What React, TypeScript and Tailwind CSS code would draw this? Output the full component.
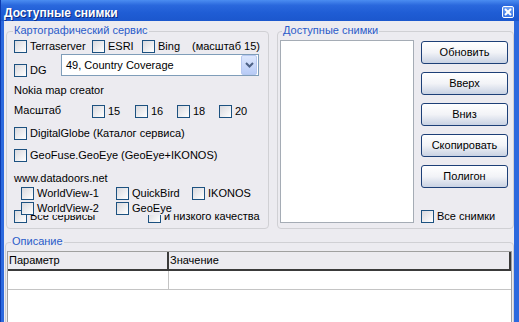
import React from 'react';

type CheckProps = { label: string; className?: string };

// XP-style checkbox with a label to its right
const Check = ({ label, className = '' }: CheckProps) => (
  <label className={`flex items-start h-[13px] shrink-0 ${className}`}>
    <span className="w-[13px] h-[13px] shrink-0 border border-[#1c5180] bg-linear-to-br from-[#d9d9de] to-white" />
    <span className="ml-[3px] leading-[13px] whitespace-nowrap">{label}</span>
  </label>
);

type GroupProps = { title: string; className?: string; labelClass?: string; children?: React.ReactNode };

const Group = ({ title, className = '', labelClass = '', children }: GroupProps) => (
  <div className={`border border-[#d0d0d4] rounded-[4px] flex flex-col ${className}`}>
    <div className={`-mt-[8px] px-[1px] w-fit bg-[#ecebf0] text-[#2a5bc9] leading-[13px] ${labelClass}`}>{title}</div>
    {children}
  </div>
);

const Btn = ({ children }: { children: React.ReactNode }) => (
  <div className="w-[87px] h-[23px] rounded-[3px] border border-[#1d3f77] bg-linear-to-b from-white via-[#f2f3f7] to-[#c9d2e3] flex items-center justify-center leading-[13px]">
    {children}
  </div>
);

const Combo = () => (
  <div className="w-[198px] h-[22px] border border-[#7f9db9] bg-white flex items-center">
    <span className="flex-1 pl-[4px] leading-[13px]">49, Country Coverage</span>
    <span className="w-[16px] h-[20px] mr-[1px] rounded-[2px] border border-[#b7c8f0] bg-linear-to-b from-[#dde7fd] to-[#b8cbf6] flex items-center justify-center">
      <svg width="9" height="6" viewBox="0 0 9 6">
        <path d="M1 1 L4.5 4.5 L8 1" fill="none" stroke="#4d6185" strokeWidth="2" />
      </svg>
    </span>
  </div>
);

const TitleBar = () => (
  <div className="h-[21px] shrink-0 flex items-start justify-between pl-[3px] pr-[5px] bg-[linear-gradient(180deg,#4b8df1_0%,#2a68dd_25%,#1f5dd5_60%,#1b57cd_100%)]">
    <span className="mt-[6px] text-white font-bold text-[12px] leading-[14px] [text-shadow:1px_1px_#0d2a80]">
      Доступные снимки
    </span>
    <span className="mt-[6px] w-[12px] h-[12px] rounded-[2px] border border-white bg-linear-to-b from-[#6ea0f4] to-[#3a74e4] flex items-center justify-center">
      <svg width="8" height="8" viewBox="0 0 8 8">
        <path d="M1 1 L7 7 M7 1 L1 7" stroke="white" strokeWidth="2" />
      </svg>
    </span>
  </div>
);

export default function App() {
  return (
    <div className="w-[519px] h-[322px] overflow-hidden flex flex-col bg-[#2c69de] border-l border-[#0c3bb0] text-[11px] text-black font-['Liberation_Sans',Arial,sans-serif]">
      <TitleBar />
      <div className="flex-1 ml-[3px] mr-[5px] bg-[#ecebf0] pt-[10px] flex flex-col">
        <div className="flex pl-[2px] gap-[8px]">
          <Group title="Картографический сервис" className="w-[263px] h-[198px]" labelClass="ml-[6px]">
            <div className="pl-[7px] flex flex-col">
              <div className="mt-[3px] flex items-start h-[13px]">
                <Check label="Terraserver" className="w-[78px]" />
                <Check label="ESRI" className="w-[50px]" />
                <Check label="Bing" className="w-[50px]" />
                <span className="leading-[13px]">(масштаб 15)</span>
              </div>
              <div className="mt-[1px] flex h-[22px]">
                <Check label="DG" className="w-[47px] mt-[10px]" />
                <Combo />
              </div>
              <div className="mt-[8px] h-[13px] leading-[13px]">Nokia map creator</div>
              <div className="mt-[8px] flex items-start h-[13px]">
                <span className="w-[78px] leading-[13px] -mt-[1px]">Масштаб</span>
                <Check label="15" className="w-[43px]" />
                <Check label="16" className="w-[42px]" />
                <Check label="18" className="w-[42px]" />
                <Check label="20" />
              </div>
              <Check label="DigitalGlobe (Каталог сервиса)" className="mt-[9px]" />
              <Check label="GeoFuse.GeoEye (GeoEye+IKONOS)" className="mt-[9px]" />
              <div className="mt-[10px] h-[13px] leading-[13px]">www.datadoors.net</div>
              <div className="mt-[2px] pl-[7px] flex items-start h-[13px]">
                <Check label="WorldView-1" className="w-[95px]" />
                <Check label="QuickBird" className="w-[76px]" />
                <Check label="IKONOS" />
              </div>
              <div className="mt-[2px] pl-[7px] flex items-start h-[13px] relative z-10">
                <Check label="WorldView-2" className="w-[95px] bg-[#ecebf0]" />
                <Check label="GeoEye" className="w-[52px] bg-[#ecebf0]" />
              </div>
              <div className="-mt-[5px] flex items-start h-[13px]">
                <Check label="Все сервисы" className="w-[134px]" />
                <Check label="и низкого качества" />
              </div>
            </div>
          </Group>
          <Group title="Доступные снимки" className="w-[237px] h-[198px]" labelClass="ml-[4px]">
            <div className="mt-[3px] pl-[2px] flex h-[183px]">
              <div className="w-[134px] h-[183px] border border-[#a5acb5] bg-white" />
              <div className="ml-[7px] pt-[1px] flex flex-col gap-[8px]">
                <Btn>Обновить</Btn>
                <Btn>Вверх</Btn>
                <Btn>Вниз</Btn>
                <Btn>Скопировать</Btn>
                <Btn>Полигон</Btn>
                <Check label="Все снимки" className="mt-auto" />
              </div>
            </div>
          </Group>
        </div>
        <Group title="Описание" className="ml-[1px] mt-[13px] w-[509px] h-[120px]" labelClass="ml-[5px]">
          <div className="mt-[3px] mx-[1px] h-[100px] border border-[#a0a0a0] bg-white">
            <div className="flex h-[19px] bg-[#ecebf0] border-b-2 border-[#3a3a3a] leading-[13px]">
              <div className="w-[161px] pl-[1px] border-r-2 border-[#3a3a3a] flex items-center">Параметр</div>
              <div className="flex-1 pl-[1px] border-r-2 border-[#3a3a3a] flex items-center">Значение</div>
            </div>
            <div className="flex h-[19px] border-b border-[#c4c4c4]">
              <div className="w-[161px] border-r border-[#c4c4c4]" />
              <div className="flex-1" />
            </div>
          </div>
        </Group>
      </div>
    </div>
  );
}
